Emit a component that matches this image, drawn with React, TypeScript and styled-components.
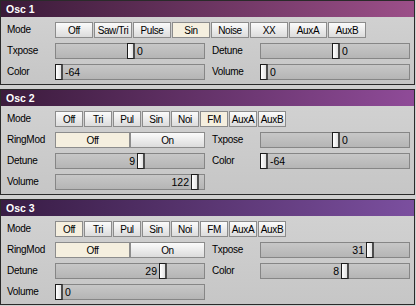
import { FC } from 'react';
import styled, { createGlobalStyle } from 'styled-components';

const GlobalStyle = createGlobalStyle`
  html, body {
    margin: 0;
    padding: 0;
    background: #d0d0d0;
  }

  body {
    font-family: 'Liberation Sans', Arial, sans-serif;
    font-size: 10px;
    letter-spacing: -0.3px;
    color: #000;
  }
`;

const Page = styled.div`
  width: 416px;
  height: 306px;
  display: flex;
  flex-direction: column;
  gap: 4px;
  overflow: hidden;
`;

const PanelBox = styled.section`
  width: 415px;
  box-sizing: border-box;
  border: 1px solid #2a2a2a;
  background: linear-gradient(#d3d3d3, #c6c6c6);
`;

const Header = styled.div<{ $from: string; $to: string }>`
  height: 16px;
  line-height: 16px;
  padding-left: 5px;
  background: linear-gradient(to right, ${(p) => p.$from}, ${(p) => p.$to});
  color: #fff;
  font-weight: bold;
  font-size: 10.5px;
  letter-spacing: 0;
`;

const Body = styled.div`
  padding: 5px 3px 4px 6px;
  display: flex;
  flex-direction: column;
  gap: 5px;
`;

const Columns = styled.div`
  display: grid;
  grid-template-columns: 198px 198px;
  column-gap: 7px;
  align-items: start;
`;

const Column = styled.div`
  display: flex;
  flex-direction: column;
  gap: 5px;
`;

const Row = styled.div`
  display: grid;
  grid-template-columns: 48px auto;
  align-items: center;
  height: 16px;
`;

const Label = styled.span`
  line-height: 16px;
  white-space: nowrap;
`;

const ButtonGroup = styled.div<{ $gap: number }>`
  display: flex;
  gap: ${(p) => p.$gap}px;
`;

const ToggleButton = styled.button<{ $active?: boolean; $w: number }>`
  width: ${(p) => p.$w}px;
  height: 16px;
  padding: 0;
  box-sizing: border-box;
  border: 1px solid #8c8c8c;
  background: ${(p) => (p.$active ? '#f5efdf' : 'linear-gradient(#fbfbfb, #dcdcdc)')};
  font: inherit;
  letter-spacing: -0.4px;
  color: #000;
  line-height: 13px;
  white-space: nowrap;
  overflow: hidden;
`;

const Track = styled.div`
  position: relative;
  width: 150px;
  height: 16px;
  box-sizing: border-box;
  border: 1px solid #868686;
  background: linear-gradient(#c7c7c7, #b5b5b5);
`;

const Thumb = styled.div`
  position: absolute;
  top: -1px;
  bottom: -1px;
  width: 8px;
  box-sizing: border-box;
  background: linear-gradient(to right, #ffffff, #e2e2e2);
  border: 1px solid #1c1c1c;
  border-right: 2px solid #4c4c4c;
`;

const Value = styled.span`
  position: absolute;
  top: 0;
  line-height: 14px;
  font-size: 10.5px;
  letter-spacing: 0;
`;

const THUMB = 8;
const WIDTH = 150;

type SliderProps = { value: number; min: number; max: number };

const Slider: FC<SliderProps> = ({ value, min, max }) => {
  const frac = (value - min) / (max - min);
  const left = Math.round(frac * (WIDTH - THUMB)) - 1;
  const textRight = frac < 0.55;

  return (
    <Track>
      {textRight ? (
        <Value style={{ left: left + THUMB + 2 }}>{value}</Value>
      ) : (
        <Value style={{ right: WIDTH - 2 - left + 2 }}>{value}</Value>
      )}
      <Thumb style={{ left }} />
    </Track>
  );
};

type Control =
  | { kind: 'slider'; label: string; value: number; min: number; max: number }
  | { kind: 'ring'; label: string; on: boolean };

const ControlRow: FC<{ c: Control }> = ({ c }) => (
  <Row>
    <Label>{c.label}</Label>
    {c.kind === 'slider' ? (
      <Slider value={c.value} min={c.min} max={c.max} />
    ) : (
      <ButtonGroup $gap={0}>
        <ToggleButton $w={75} $active={!c.on}>
          Off
        </ToggleButton>
        <ToggleButton $w={75} $active={c.on}>
          On
        </ToggleButton>
      </ButtonGroup>
    )}
  </Row>
);

type Osc = {
  title: string;
  from: string;
  to: string;
  modes: string[];
  active: string;
  btnW: number;
  left: Control[];
  right: Control[];
};

const oscs: Osc[] = [
  {
    title: 'Osc 1',
    from: '#3a1a38',
    to: '#9c4f89',
    modes: ['Off', 'Saw/Tri', 'Pulse', 'Sin', 'Noise', 'XX', 'AuxA', 'AuxB'],
    active: 'Sin',
    btnW: 38,
    left: [
      { kind: 'slider', label: 'Txpose', value: 0, min: -64, max: 63 },
      { kind: 'slider', label: 'Color', value: -64, min: -64, max: 63 },
    ],
    right: [
      { kind: 'slider', label: 'Detune', value: 0, min: -64, max: 63 },
      { kind: 'slider', label: 'Volume', value: 0, min: 0, max: 127 },
    ],
  },
  {
    title: 'Osc 2',
    from: '#3b1b3c',
    to: '#8f4b98',
    modes: ['Off', 'Tri', 'Pul', 'Sin', 'Noi', 'FM', 'AuxA', 'AuxB'],
    active: 'FM',
    btnW: 28,
    left: [
      { kind: 'ring', label: 'RingMod', on: false },
      { kind: 'slider', label: 'Detune', value: 9, min: -64, max: 63 },
      { kind: 'slider', label: 'Volume', value: 122, min: 0, max: 127 },
    ],
    right: [
      { kind: 'slider', label: 'Txpose', value: 0, min: -64, max: 63 },
      { kind: 'slider', label: 'Color', value: -64, min: -64, max: 63 },
    ],
  },
  {
    title: 'Osc 3',
    from: '#381c44',
    to: '#7b4f9f',
    modes: ['Off', 'Tri', 'Pul', 'Sin', 'Noi', 'FM', 'AuxA', 'AuxB'],
    active: 'Off',
    btnW: 28,
    left: [
      { kind: 'ring', label: 'RingMod', on: false },
      { kind: 'slider', label: 'Detune', value: 29, min: -64, max: 63 },
      { kind: 'slider', label: 'Volume', value: 0, min: 0, max: 127 },
    ],
    right: [
      { kind: 'slider', label: 'Txpose', value: 31, min: -64, max: 63 },
      { kind: 'slider', label: 'Color', value: 8, min: -64, max: 63 },
    ],
  },
];

const OscPanel: FC<{ osc: Osc }> = ({ osc }) => (
  <PanelBox>
    <Header $from={osc.from} $to={osc.to}>
      {osc.title}
    </Header>
    <Body>
      <Row>
        <Label>Mode</Label>
        <ButtonGroup $gap={1}>
          {osc.modes.map((m) => (
            <ToggleButton key={m} $w={osc.btnW} $active={m === osc.active}>
              {m}
            </ToggleButton>
          ))}
        </ButtonGroup>
      </Row>
      <Columns>
        <Column>
          {osc.left.map((c) => (
            <ControlRow key={c.label} c={c} />
          ))}
        </Column>
        <Column>
          {osc.right.map((c) => (
            <ControlRow key={c.label} c={c} />
          ))}
        </Column>
      </Columns>
    </Body>
  </PanelBox>
);

const App: FC = () => (
  <>
    <GlobalStyle />
    <Page>
      {oscs.map((o) => (
        <OscPanel key={o.title} osc={o} />
      ))}
    </Page>
  </>
);

export default App;
